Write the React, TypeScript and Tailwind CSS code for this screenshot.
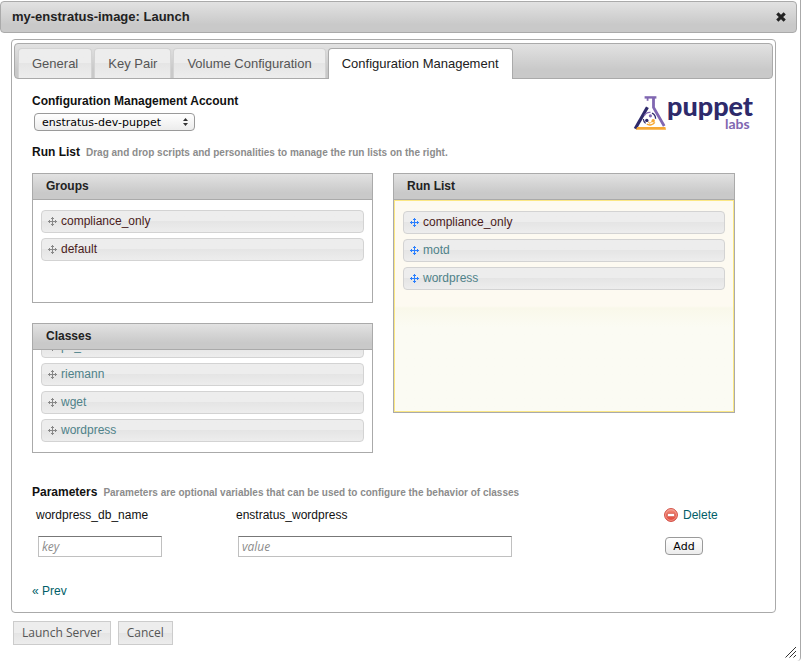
import React from "react";

const TABS = ["General", "Key Pair", "Volume Configuration", "Configuration Management"];
const ACTIVE_TAB = "Configuration Management";

type Kind = "group" | "class";
type Entry = { name: string; kind: Kind };

const GROUPS: Entry[] = [
  { name: "compliance_only", kind: "group" },
  { name: "default", kind: "group" },
];

const CLASSES: Entry[] = [
  { name: "pe_mcollective", kind: "class" },
  { name: "riemann", kind: "class" },
  { name: "wget", kind: "class" },
  { name: "wordpress", kind: "class" },
];

const RUN_LIST: Entry[] = [
  { name: "compliance_only", kind: "group" },
  { name: "motd", kind: "class" },
  { name: "wordpress", kind: "class" },
];

function MoveIcon({ className }: { className: string }) {
  return (
    <svg viewBox="0 0 9 9" className={`h-[9px] w-[9px] shrink-0 ${className}`} fill="currentColor" shapeRendering="crispEdges" aria-hidden="true">
      <path d="M4 0h1v9h-1zM0 4h9v1h-9zM3 1h3v1h-3zM3 7h3v1h-3zM1 3h1v3h-1zM7 3h1v3h-1z" />
    </svg>
  );
}

function CloseIcon() {
  return (
    <svg viewBox="0 0 10 10" className="h-[10px] w-[10px]" aria-hidden="true">
      <path d="M1.3 1.3 8.7 8.7M8.7 1.3 1.3 8.7" stroke="#222" strokeWidth="3.1" />
    </svg>
  );
}

function DeleteIcon() {
  return (
    <svg viewBox="0 0 14 14" className="h-[14px] w-[14px]" aria-hidden="true">
      <defs>
        <linearGradient id="deleteFill" x1="0" y1="0" x2="0" y2="1">
          <stop offset="0" stopColor="#f5a192" />
          <stop offset="0.45" stopColor="#e8604f" />
          <stop offset="1" stopColor="#e2483c" />
        </linearGradient>
      </defs>
      <circle cx="7" cy="7" r="6.4" fill="url(#deleteFill)" stroke="#cf4a40" strokeWidth="1" />
      <circle cx="7" cy="7" r="5.4" fill="none" stroke="#f7b0a5" strokeWidth="0.7" />
      <rect x="3.5" y="5.5" width="7" height="3" rx="0.6" fill="#fff" stroke="#c9473c" strokeWidth="0.5" />
    </svg>
  );
}

function PuppetLogo() {
  return (
    <svg viewBox="0 0 122 40" className="h-[40px] w-[122px]" role="img" aria-label="puppet labs">
      <path d="M2.2 36.8 14.4 15.2" stroke="#2e2a6b" strokeWidth="3.2" fill="none" />
      <path d="M11.6 5.4H23.4" stroke="#8067b1" strokeWidth="2.4" fill="none" />
      <path d="M14.6 5.6v3.2" stroke="#8067b1" strokeWidth="1.8" fill="none" />
      <path d="M20.5 5.6v9.8L31.2 34" stroke="#8067b1" strokeWidth="2.8" fill="none" />
      <path d="M4.2 35H32.4L33 37.8H2.8z" fill="#f6a834" />
      <path d="M11.2 24a6.2 6.2 0 0 1 6.3-3.6" stroke="#8067b1" strokeWidth="1.3" fill="none" />
      <path d="M19 21.2a6.2 6.2 0 0 1 3.6 5.6" stroke="#2e2a6b" strokeWidth="1.3" fill="none" />
      <path d="M21.8 30.4a6.4 6.4 0 0 1-8 1.8" stroke="#f6a834" strokeWidth="1.5" fill="none" />
      <path d="M10.4 27a6 6 0 0 0 2.2 4.4" stroke="#2e2a6b" strokeWidth="1.2" fill="none" />
      <path d="M14 29l3 2.4 3-3" stroke="#f6a834" strokeWidth="1" fill="none" />
      <circle cx="17.4" cy="23.8" r="1.6" fill="#8067b1" />
      <circle cx="13.8" cy="28.4" r="1.7" fill="#2e2a6b" />
      <circle cx="20.2" cy="28.8" r="1.7" fill="#f6a834" />
      <text x="34" y="24" className="font-['Lato',sans-serif] text-[27px] font-black" fill="#2e2a6b">puppet</text>
      <text x="92" y="37" className="font-['Lato',sans-serif] text-[14px] font-bold" fill="#8067b1">labs</text>
    </svg>
  );
}

function EntryItem({ entry, active = false }: { entry: Entry; active?: boolean }) {
  return (
    <li className="flex h-[23px] shrink-0 items-center gap-1 rounded border border-[#d3d3d3] bg-linear-to-b from-[#ededed] from-48% via-[#e5e5e5] via-50% to-[#ededed] px-[6px]">
      <MoveIcon className={active ? "text-[#2a7fff]" : "text-[#888888]"} />
      <span className={`pb-[2px] text-[12px] leading-[18px] ${entry.kind === "group" ? "text-[#4a1c1c]" : "text-[#4f8289]"}`}>{entry.name}</span>
    </li>
  );
}

function ListHeader({ title }: { title: string }) {
  return (
    <h3 className="h-[26px] border-b border-[#aaaaaa] bg-linear-to-b from-[#e2e2e2] to-[#c9c9c9] to-75% px-[13px] text-[12px] leading-[24px] font-bold text-[#222222]">
      {title}
    </h3>
  );
}

function SourceList({ title, entries }: { title: string; entries: Entry[] }) {
  const align = entries.length > 3 ? "justify-end" : "justify-start";
  return (
    <section className="flex h-[130px] flex-col border border-[#aaaaaa]">
      <ListHeader title={title} />
      <ul className={`flex min-h-0 flex-1 flex-col gap-[5px] overflow-hidden px-2 py-[10px] ${align}`}>
        {entries.map((e) => (
          <EntryItem key={e.name} entry={e} />
        ))}
      </ul>
    </section>
  );
}

function SectionTitle({ title, note }: { title: string; note: string }) {
  return (
    <h2 className="text-[12px] leading-[18px] font-bold text-[#111111]">
      {title}
      <span className="ml-[6px] text-[10px] leading-none text-[#8c8c8c]">{note}</span>
    </h2>
  );
}

export default function App() {
  return (
    <div className="relative min-h-screen rounded-br border-r border-[#aaaaaa] bg-white pt-px font-['Liberation_Sans',Arial,sans-serif] text-[12px] text-[#111111]">
      <header className="mr-[3px] flex h-8 items-center justify-between rounded border border-[#aaaaaa] bg-linear-to-b from-[#e2e2e2] to-[#c9c9c9] to-75% pr-[10px] pl-[11px]">
        <h1 className="text-[13px] font-bold text-[#222222]">my-enstratus-image: Launch</h1>
        <button type="button" aria-label="Close">
          <CloseIcon />
        </button>
      </header>

      <main className="mt-[6px] mr-6 ml-[11px] rounded border border-[#aaaaaa] pt-[3px]">
        <nav className="mx-[2px] flex h-9 items-end gap-[2px] rounded border border-[#aaaaaa] bg-linear-to-b from-[#e2e2e2] to-[#c9c9c9] to-75% pl-[3px]" aria-label="Steps">
          {TABS.map((tab) =>
            tab === ACTIVE_TAB ? (
              <button key={tab} type="button" aria-current="step" className="-mb-px h-[31px] rounded-t border border-b-0 border-[#aaaaaa] bg-white px-[13px] text-[13px] text-[#212121]">
                {tab}
              </button>
            ) : (
              <button key={tab} type="button" className="h-[30px] rounded-t border border-b-0 border-[#d3d3d3] bg-linear-to-b from-[#ededed] from-48% via-[#e5e5e5] via-50% to-[#ededed] px-[13px] text-[13px] text-[#555555]">
                {tab}
              </button>
            ),
          )}
        </nav>

        <div className="pt-[13px] pr-10 pb-3 pl-5">
          <div className="flex justify-between">
            <div>
              <label htmlFor="account" className="block text-[12px] leading-[18px] font-bold">
                Configuration Management Account
              </label>
              <div className="relative mt-[3px] ml-[2px] h-[18px] w-[161px]">
                <select id="account" className="block h-full w-full appearance-none rounded border border-[#9a9a9a] bg-linear-to-b from-white to-[#ececec] pl-[7px] font-['DejaVu_Sans',sans-serif] text-[11px] leading-none text-black">
                  <option>enstratus-dev-puppet</option>
                </select>
                <svg viewBox="0 0 5 8" className="pointer-events-none absolute top-[5px] right-[7px] h-2 w-[5px]" aria-hidden="true">
                  <path d="M0 3 2.5 0 5 3zM0 5h5L2.5 8z" fill="#333" />
                </svg>
              </div>
              <div className="mt-3">
                <SectionTitle title="Run List" note="Drag and drop scripts and personalities to manage the run lists on the right." />
              </div>
            </div>
            <div className="-mr-5">
              <PuppetLogo />
            </div>
          </div>

          <div className="mt-3 grid grid-cols-[341fr_342fr] items-start gap-5">
            <div className="grid gap-5">
              <SourceList title="Groups" entries={GROUPS} />
              <SourceList title="Classes" entries={CLASSES} />
            </div>
            <section className="flex h-[240px] flex-col border border-[#aaaaaa]">
              <ListHeader title="Run List" />
              <ul className="flex flex-1 flex-col gap-[5px] border border-[#fbe784] bg-linear-to-b from-[#fdfaf1] from-50% via-[#f9f8ea] via-51% to-[#fbfbf3] to-60% px-2 py-[10px]">
                {RUN_LIST.map((e) => (
                  <EntryItem key={e.name} entry={e} active />
                ))}
              </ul>
            </section>
          </div>

          <div className="mt-[30px]">
            <SectionTitle title="Parameters" note="Parameters are optional variables that can be used to configure the behavior of classes" />
          </div>

          <table className="w-full table-fixed border-collapse">
            <colgroup>
              <col className="w-[200px]" />
              <col />
              <col className="w-[74px]" />
            </colgroup>
            <tbody>
              <tr className="h-7">
                <td className="px-1">wordpress_db_name</td>
                <td className="px-1">enstratus_wordpress</td>
                <td className="pl-[3px]">
                  <a href="#delete" className="flex items-center gap-[5px] text-[#005e68]">
                    <DeleteIcon />
                    Delete
                  </a>
                </td>
              </tr>
              <tr className="h-[34px]">
                <td className="px-[6px]">
                  <input aria-label="Key" placeholder="key" className="block h-[21px] w-[124px] border border-[#c0c0c0] border-t-[#777777] px-[3px] font-['Open_Sans',sans-serif] text-[12px] placeholder:text-[#8c8c8c] placeholder:italic" />
                </td>
                <td className="px-[6px]">
                  <input aria-label="Value" placeholder="value" className="block h-[21px] w-[274px] border border-[#c0c0c0] border-t-[#777777] px-[3px] font-['Open_Sans',sans-serif] text-[12px] placeholder:text-[#8c8c8c] placeholder:italic" />
                </td>
                <td className="pl-1">
                  <button type="button" className="block h-[18px] w-[38px] rounded border border-[#9a9a9a] bg-linear-to-b from-white to-[#ececec] font-['DejaVu_Sans',sans-serif] text-[11px] leading-none text-black">
                    Add
                  </button>
                </td>
              </tr>
            </tbody>
          </table>

          <a href="#prev" className="mt-[19px] block w-fit text-[12px] leading-[18px] text-[#005e68]">
            « Prev
          </a>
        </div>
      </main>

      <footer className="mt-2 ml-[13px] flex gap-[7px]">
        {["Launch Server", "Cancel"].map((label) => (
          <button key={label} type="button" className="h-6 border border-[#cccccc] bg-linear-to-b from-[#ededed] from-48% via-[#e4e4e4] via-50% to-[#ededed] px-2 font-['Open_Sans',sans-serif] text-[12px] leading-none text-[#555555]">
            {label}
          </button>
        ))}
      </footer>

      <svg viewBox="0 0 12 12" className="absolute right-[3px] bottom-[3px] h-3 w-3" aria-hidden="true">
        <path d="M0.5 11.5 11 1M4.5 11.5 11 5M8.5 11.5 11 9" stroke="#333" strokeWidth="1" fill="none" />
      </svg>
    </div>
  );
}
